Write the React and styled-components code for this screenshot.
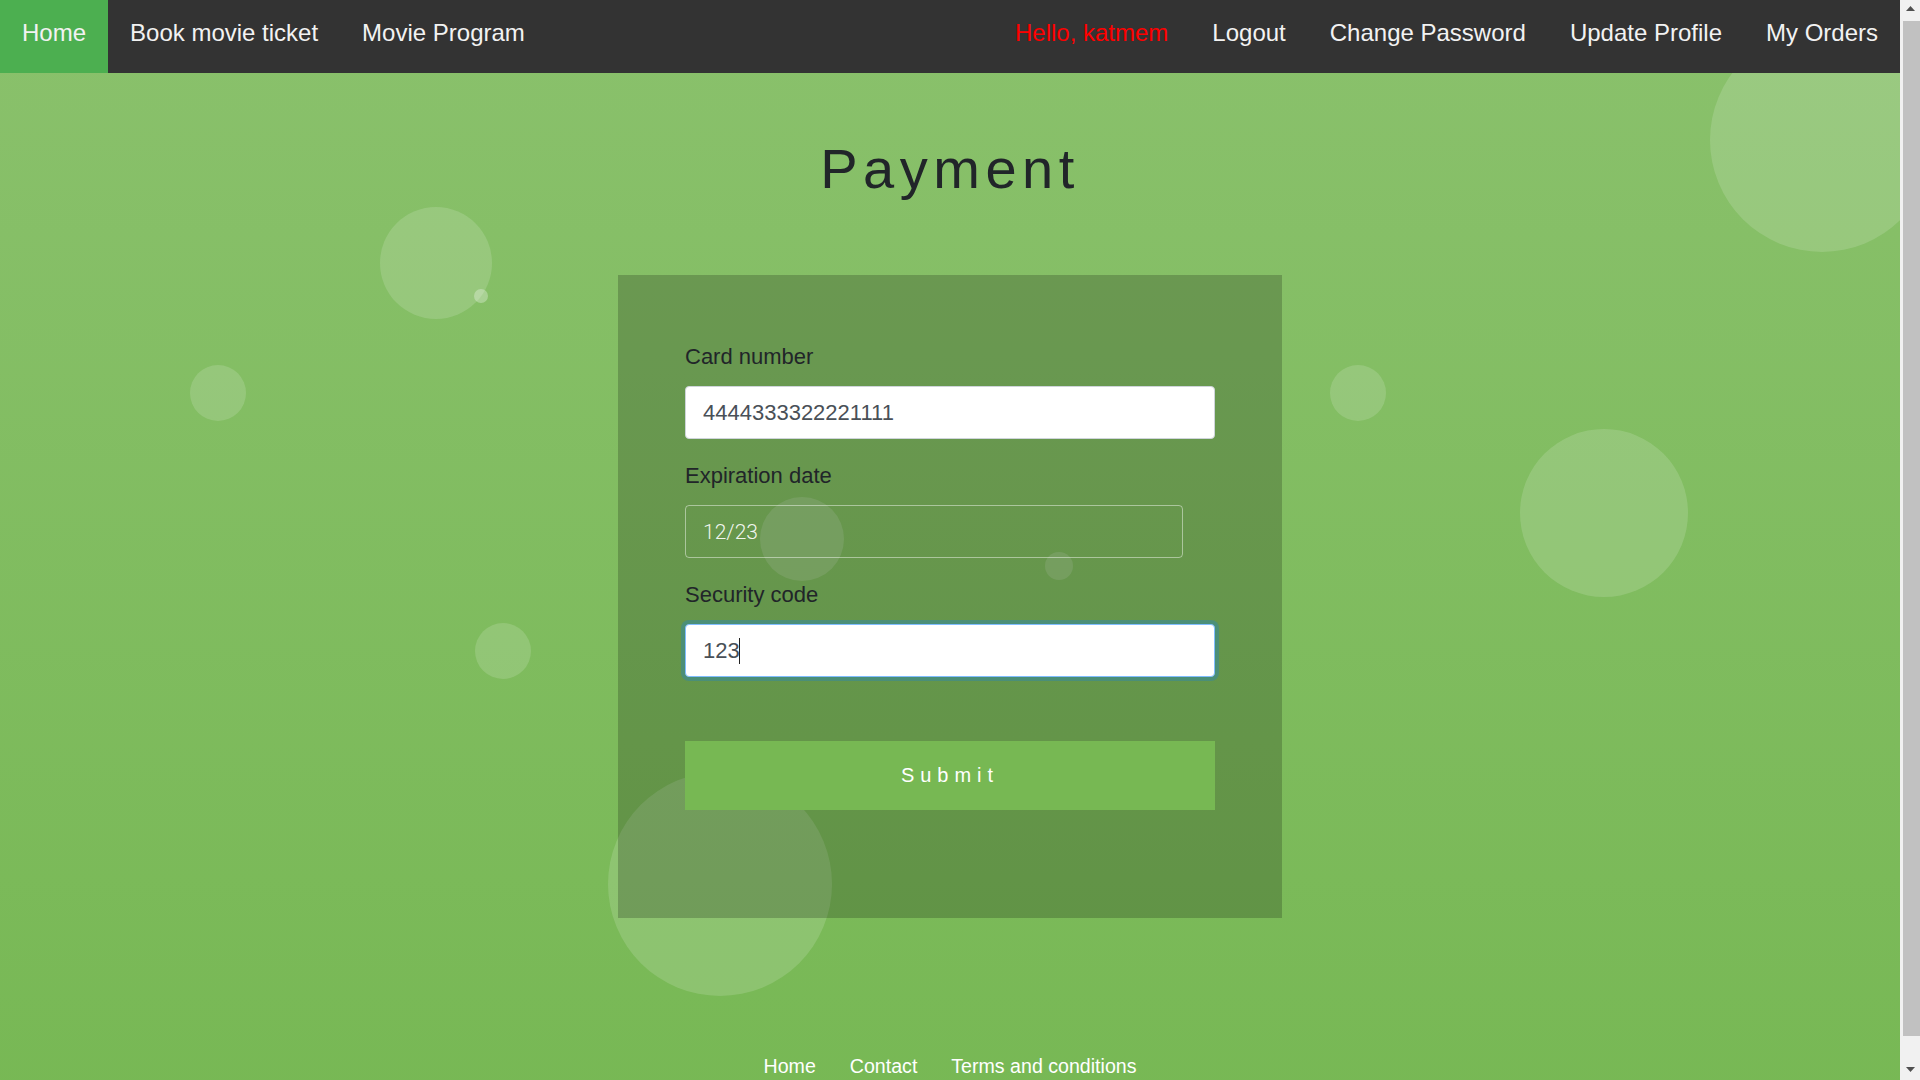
import React from "react";
import styled, { createGlobalStyle } from "styled-components";

const Global = createGlobalStyle`
  html, body { margin: 0; padding: 0; }
  body {
    font-family: "Liberation Sans", Arial, sans-serif;
    color: #212529;
  }
  * { box-sizing: border-box; }
`;

const Shell = styled.div`
  display: flex;
  align-items: flex-start;
`;

const Page = styled.div`
  position: relative;
  flex: 1;
  min-width: 0;
  min-height: 1111px;
  background: linear-gradient(180deg, #8ac16c 0%, #77b854 100%);
  overflow: hidden;
`;

const ScrollRail = styled.div`
  position: sticky;
  top: 0;
  width: 20px;
  height: 100vh;
  flex: 0 0 20px;
  background: #f1f1f1;
  display: flex;
  flex-direction: column;
  align-items: center;
`;

const ArrowBox = styled.div`
  height: ${(p) => (p.$down ? "44px" : "21px")};
  width: 100%;
  display: flex;
  align-items: ${(p) => (p.$down ? "flex-end" : "flex-start")};
  justify-content: center;
  padding: ${(p) => (p.$down ? "0 0 8px 1px" : "6px 0 0 1px")};
`;

const Thumb = styled.div`
  flex: 1;
  width: 17px;
  margin-left: 2px;
  background: #c1c1c1;
`;

const BubbleLayer = styled.div`
  position: absolute;
  inset: 0;
  z-index: 0;
  pointer-events: none;
`;

const Bubble = styled.span`
  position: absolute;
  left: ${(p) => p.$x - p.$r}px;
  top: ${(p) => p.$y - p.$r}px;
  width: ${(p) => p.$r * 2}px;
  height: ${(p) => p.$r * 2}px;
  border-radius: 50%;
  background: rgba(255, 255, 255, ${(p) => p.$a || 0.15});
`;

const Nav = styled.nav`
  position: relative;
  z-index: 2;
  display: flex;
  background: #333333;
  height: 73px;
`;

const NavGroup = styled.div`
  display: flex;
  margin-left: ${(p) => (p.$right ? "auto" : "0")};
`;

const NavLink = styled.a`
  display: block;
  padding: 18px 22px 26px;
  line-height: 29px;
  font-size: 24px;
  color: ${(p) => (p.$greet ? "#ff0000" : "#f2f2f2")};
  background: ${(p) => (p.$active ? "#4caf50" : "transparent")};
  text-decoration: none;
  white-space: nowrap;
  cursor: pointer;
`;

const Main = styled.main`
  position: relative;
  z-index: 1;
  display: flex;
  flex-direction: column;
  align-items: center;
`;

const Title = styled.h1`
  margin: 64px 0 74px;
  font-size: 56px;
  line-height: 64px;
  font-weight: 400;
  letter-spacing: 5.5px;
  color: #212529;
`;

const Card = styled.form`
  width: 664px;
  background: rgba(0, 0, 0, 0.2);
  padding: 65px 67px 108px;
  display: flex;
  flex-direction: column;
`;

const Group = styled.div`
  display: flex;
  flex-direction: column;
  align-items: flex-start;
  margin-bottom: 20px;
`;

const Label = styled.label`
  font-size: 22px;
  line-height: 33px;
  margin-bottom: 13px;
  color: #212529;
`;

const Field = styled.div`
  position: relative;
  width: ${(p) => (p.$narrow ? "498px" : "100%")};
`;

const Input = styled.input`
  width: 100%;
  height: 53px;
  padding: 0 17px;
  font-family: ${(p) =>
    p.$ghost ? `"Roboto", "Liberation Sans", sans-serif` : `"Liberation Sans", Arial, sans-serif`};
  font-weight: ${(p) => (p.$ghost ? 300 : 400)};
  font-size: ${(p) => (p.$ghost ? "21px" : "22px")};
  border-radius: 4px;
  outline: none;
  color: ${(p) => (p.$ghost ? "rgba(255,255,255,0.92)" : "#495057")};
  background: ${(p) => (p.$ghost ? "transparent" : "#ffffff")};
  border: 1px solid
    ${(p) =>
      p.$ghost ? "rgba(255,255,255,0.45)" : p.$focus ? "#80bdff" : "#ced4da"};
  box-shadow: ${(p) =>
    p.$focus ? "0 0 0 4px rgba(0, 123, 255, 0.25)" : "none"};
  caret-color: transparent;
`;

const Caret = styled.span`
  position: absolute;
  left: 54px;
  top: 14px;
  width: 1px;
  height: 26px;
  background: #222;
  pointer-events: none;
`;

const Submit = styled.button`
  margin-top: 44px;
  height: 69px;
  width: 100%;
  border: none;
  background: #77b853;
  color: #ffffff;
  font-family: "Liberation Sans", Arial, sans-serif;
  font-size: 20px;
  letter-spacing: 6px;
  padding-left: 6px;
  cursor: pointer;
`;

const Footer = styled.footer`
  position: relative;
  z-index: 1;
  display: flex;
  justify-content: center;
  gap: 34px;
  margin-top: 137px;
  padding-bottom: 33px;
`;

const FootLink = styled.a`
  font-size: 19.6px;
  line-height: 23px;
  color: #ffffff;
  text-decoration: none;
`;

const bubbles = [
  { x: 1822, y: 140, r: 112 },
  { x: 436, y: 263, r: 56 },
  { x: 481, y: 296, r: 7, a: 0.3 },
  { x: 218, y: 393, r: 28 },
  { x: 1358, y: 393, r: 28 },
  { x: 1604, y: 513, r: 84 },
  { x: 802, y: 539, r: 42 },
  { x: 1059, y: 566, r: 14 },
  { x: 503, y: 651, r: 28 },
  { x: 720, y: 884, r: 112 },
];

const Arrow = ({ down }) => (
  <svg width="9" height="5" viewBox="0 0 9 5">
    <path d={down ? "M0 0 H9 L4.5 5 Z" : "M0 5 H9 L4.5 0 Z"} fill="#505050" />
  </svg>
);

export default function App() {
  return (
    <>
      <Global />
      <Shell>
        <Page>
          <BubbleLayer>
            {bubbles.map((b, i) => (
              <Bubble key={i} $x={b.x} $y={b.y} $r={b.r} $a={b.a} />
            ))}
          </BubbleLayer>
          <Nav>
            <NavGroup>
              <NavLink $active>Home</NavLink>
              <NavLink>Book movie ticket</NavLink>
              <NavLink>Movie Program</NavLink>
            </NavGroup>
            <NavGroup $right>
              <NavLink $greet>Hello, katmem</NavLink>
              <NavLink>Logout</NavLink>
              <NavLink>Change Password</NavLink>
              <NavLink>Update Profile</NavLink>
              <NavLink>My Orders</NavLink>
            </NavGroup>
          </Nav>
          <Main>
            <Title>Payment</Title>
            <Card onSubmit={(e) => e.preventDefault()}>
              <Group>
                <Label htmlFor="card">Card number</Label>
                <Field>
                  <Input id="card" defaultValue="4444333322221111" />
                </Field>
              </Group>
              <Group>
                <Label htmlFor="exp">Expiration date</Label>
                <Field $narrow>
                  <Input id="exp" $ghost defaultValue="12/23" />
                </Field>
              </Group>
              <Group>
                <Label htmlFor="cvc">Security code</Label>
                <Field>
                  <Input id="cvc" $focus defaultValue="123" />
                  <Caret />
                </Field>
              </Group>
              <Submit type="submit">Submit</Submit>
            </Card>
          </Main>
          <Footer>
            <FootLink>Home</FootLink>
            <FootLink>Contact</FootLink>
            <FootLink>Terms and conditions</FootLink>
          </Footer>
        </Page>
        <ScrollRail aria-hidden="true">
          <ArrowBox>
            <Arrow />
          </ArrowBox>
          <Thumb />
          <ArrowBox $down>
            <Arrow down />
          </ArrowBox>
        </ScrollRail>
      </Shell>
    </>
  );
}
